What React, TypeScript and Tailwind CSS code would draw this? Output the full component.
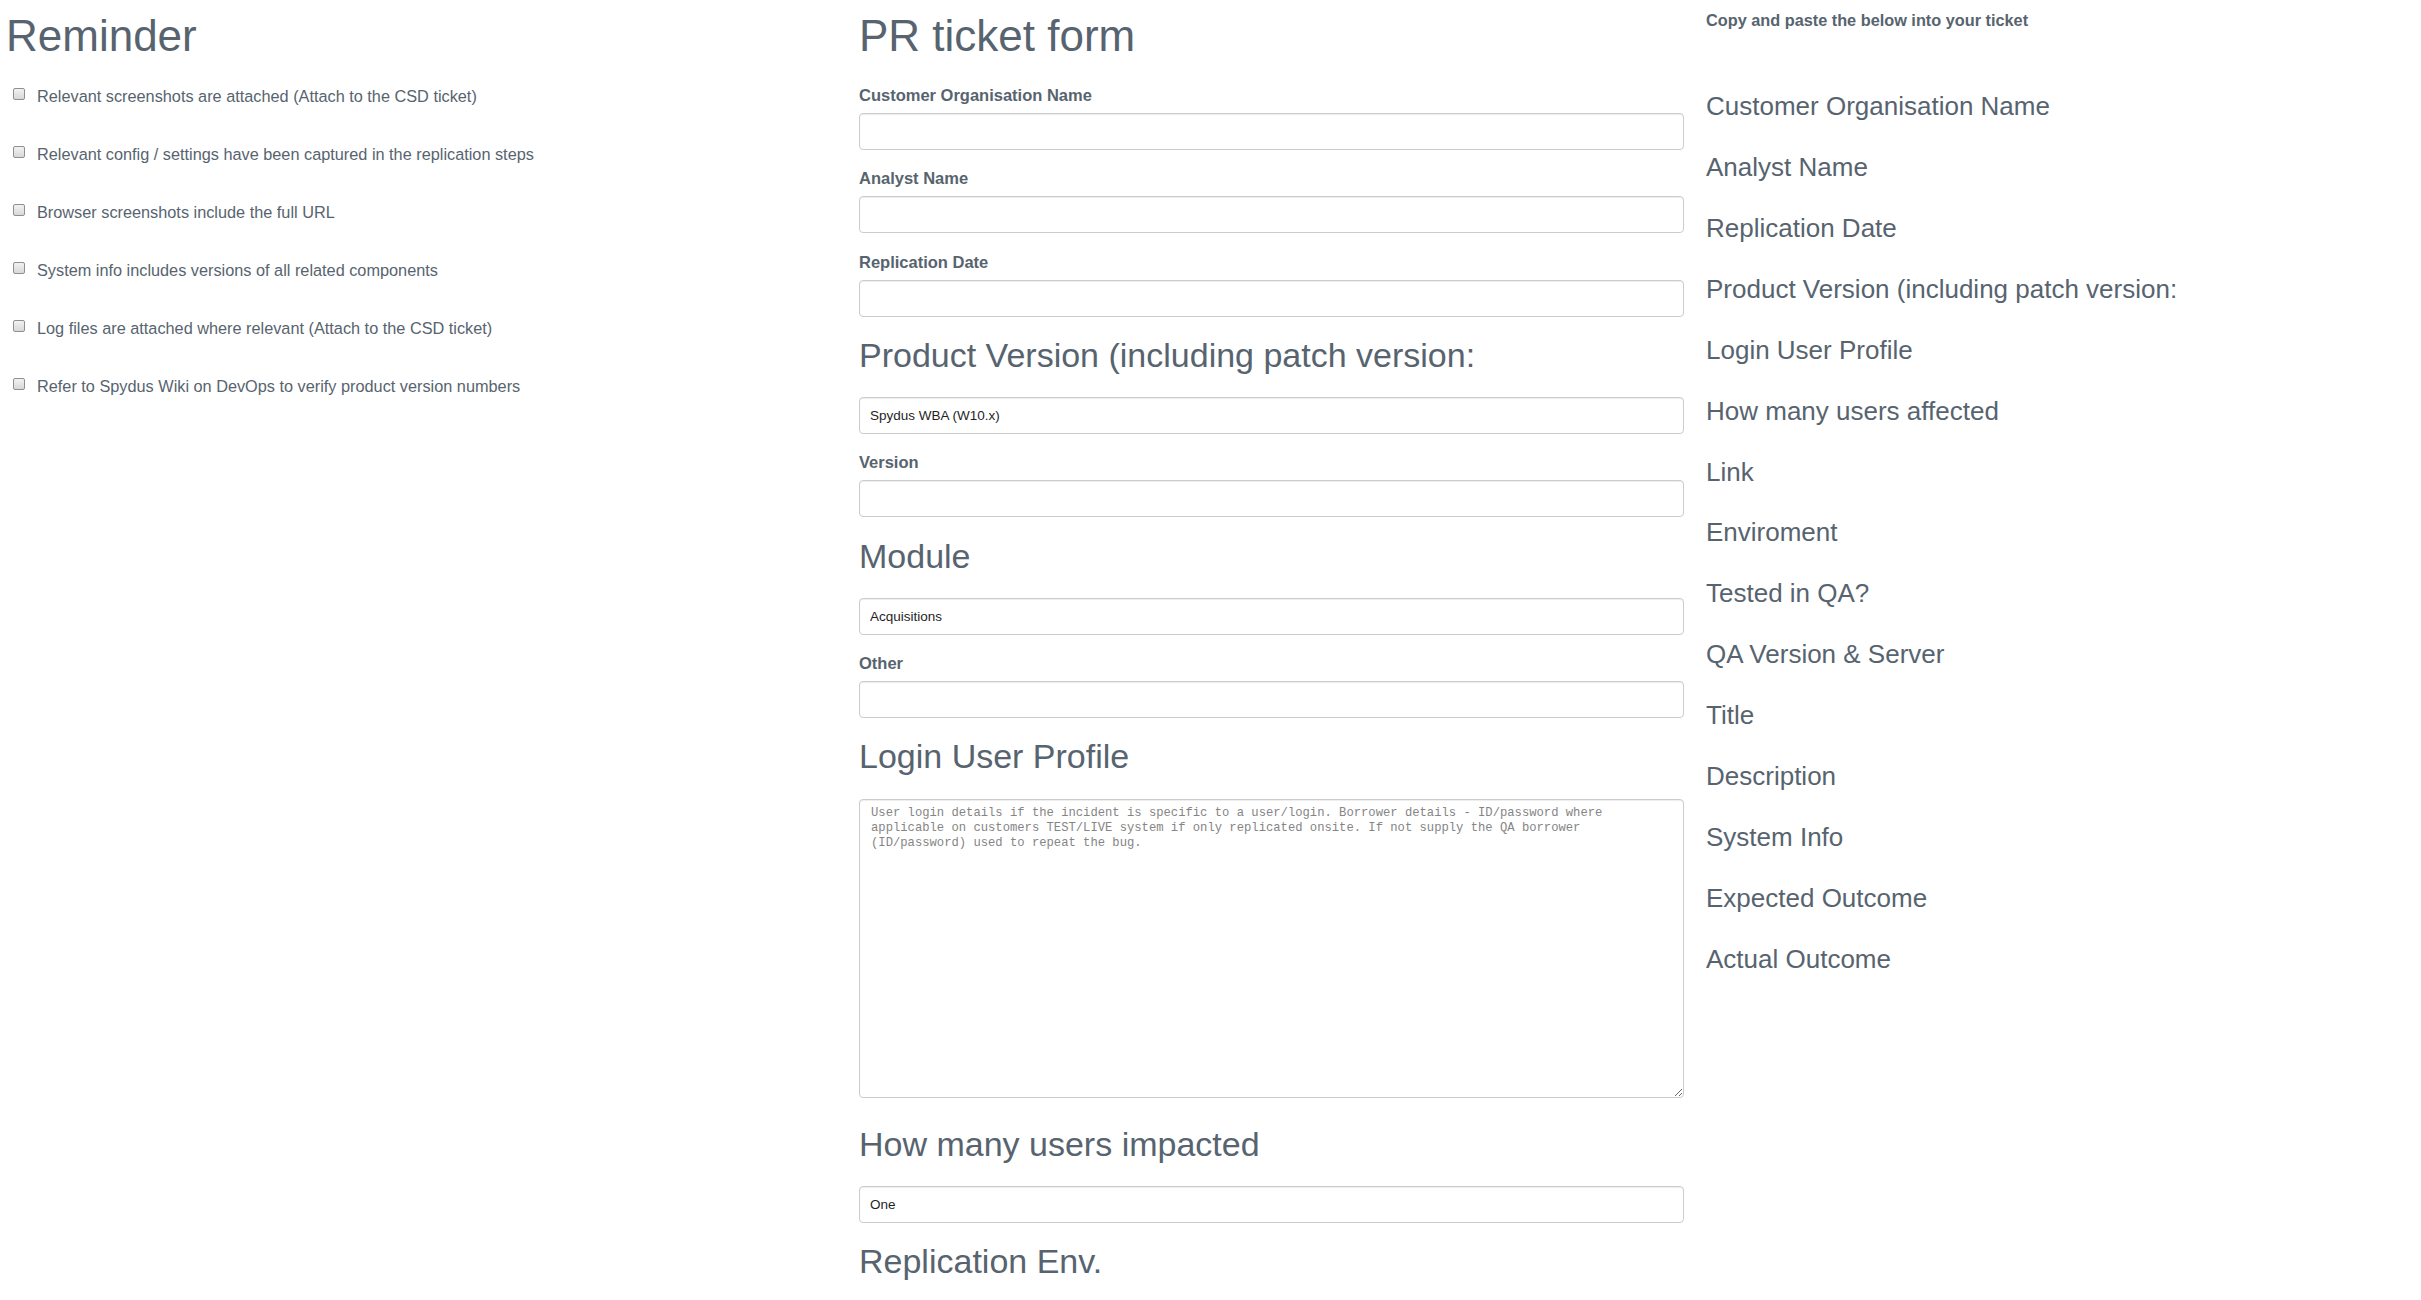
import React from 'react';

const reminders = [
    'Relevant screenshots are attached (Attach to the CSD ticket)',
    'Relevant config / settings have been captured in the replication steps',
    'Browser screenshots include the full URL',
    'System info includes versions of all related components',
    'Log files are attached where relevant (Attach to the CSD ticket)',
    'Refer to Spydus Wiki on DevOps to verify product version numbers',
];

const ticketLines = [
    'Customer Organisation Name',
    'Analyst Name',
    'Replication Date',
    'Product Version (including patch version:',
    'Login User Profile',
    'How many users affected',
    'Link',
    'Enviroment',
    'Tested in QA?',
    'QA Version & Server',
    'Title',
    'Description',
    'System Info',
    'Expected Outcome',
    'Actual Outcome',
];

const inputClass =
    'block w-full h-[37px] border border-[#cccccc] rounded-[4px] bg-white pl-[10px] text-[13.5px] text-[#1f1f1f] shadow-[inset_0_1px_1px_rgba(0,0,0,0.075)] outline-none';

// label + text box
function Field({ label, value = '', first = false }: { label: string; value?: string; first?: boolean }) {
    return (
        <div className={`flex flex-col ${first ? 'mt-[25px]' : 'mt-[18.3px]'}`}>
            <label className="block text-[16.5px] font-bold leading-[20px]">{label}</label>
            <input type="text" readOnly value={value} className={`mt-[8px] ${inputClass}`} />
        </div>
    );
}

function SectionTitle({ children, className = '' }: { children: React.ReactNode; className?: string }) {
    return <h2 className={`text-[34px] leading-[40px] font-normal ${className}`}>{children}</h2>;
}

function Checkbox() {
    return (
        <span className="block w-[12px] h-[12px] shrink-0 rounded-[2px] border border-[#8f8f8f] bg-gradient-to-b from-[#f2f2f2] to-[#d8d8d8]" />
    );
}

export default function App() {
    return (
        <div className="flex items-start w-[2421px] min-h-[1300px] bg-white text-[#57646f] font-['Liberation_Sans',Arial,sans-serif]">
            {/* Reminder column */}
            <div className="w-[859px] shrink-0 pl-[6px] flex flex-col">
                <h1 className="mt-[12px] text-[44px] leading-[48px] font-normal">Reminder</h1>
                <ul className="mt-[25.7px] flex flex-col gap-[38px]">
                    {reminders.map((r) => (
                        <li key={r} className="flex items-start h-[20px]">
                            <span className="ml-[7px] mt-[2.3px]">
                                <Checkbox />
                            </span>
                            <span className="ml-[12px] text-[16.3px] leading-[20px]">{r}</span>
                        </li>
                    ))}
                </ul>
            </div>

            {/* Form column */}
            <div className="w-[825px] shrink-0 pb-[20px] flex flex-col">
                <h1 className="mt-[12px] text-[44px] leading-[48px] font-normal">PR ticket form</h1>
                <Field label="Customer Organisation Name" first />
                <Field label="Analyst Name" />
                <Field label="Replication Date" />

                <SectionTitle className="mt-[18.7px]">Product Version (including patch version:</SectionTitle>
                <input type="text" readOnly value="Spydus WBA (W10.x)" className={`mt-[21.8px] ${inputClass}`} />
                <Field label="Version" />

                <SectionTitle className="mt-[18.2px]">Module</SectionTitle>
                <input type="text" readOnly value="Acquisitions" className={`mt-[22.3px] ${inputClass}`} />
                <Field label="Other" />

                <SectionTitle className="mt-[18.2px]">Login User Profile</SectionTitle>
                <textarea
                    readOnly
                    placeholder="User login details if the incident is specific to a user/login. Borrower details - ID/password where applicable on customers TEST/LIVE system if only replicated onsite. If not supply the QA borrower (ID/password) used to repeat the bug."
                    className="mt-[22.6px] block w-full h-[299px] border border-[#cccccc] rounded-[4px] bg-white pt-[6px] pl-[11px] pr-[11px] font-['Liberation_Mono',monospace] text-[12.2px] leading-[15px] text-[#333] placeholder:text-[#858585] shadow-[inset_0_1px_1px_rgba(0,0,0,0.075)] outline-none"
                />

                <SectionTitle className="mt-[26.2px]">How many users impacted</SectionTitle>
                <input type="text" readOnly value="One" className={`mt-[21.8px] ${inputClass}`} />

                <SectionTitle className="mt-[18.2px]">Replication Env.</SectionTitle>
            </div>

            {/* Copy/paste column */}
            <div className="ml-[22px] flex-1 flex flex-col">
                <p className="mt-[10px] text-[16.3px] font-bold leading-[20px]">Copy and paste the below into your ticket</p>
                <div className="mt-[61px] flex flex-col gap-[30.93px]">
                    {ticketLines.map((t) => (
                        <p key={t} className="text-[26px] leading-[30px]">
                            {t}
                        </p>
                    ))}
                </div>
            </div>
        </div>
    );
}
